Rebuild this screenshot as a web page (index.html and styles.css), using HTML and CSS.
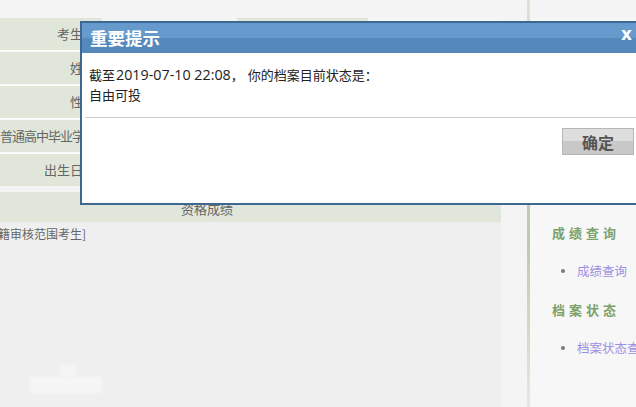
FILE: index.html
```html
<!DOCTYPE html>
<html lang="zh-CN">
<head>
<meta charset="utf-8">
<title>重要提示</title>
<link rel="stylesheet" href="styles.css">
</head>
<body>
<div class="page">
  <div class="main">
    <div class="info-table">
      <div class="row"><div class="label">考生号</div><div class="value"></div><div class="label label-2">报名号</div><div class="value"></div></div>
      <div class="row"><div class="label">姓名</div><div class="value"></div><div class="label label-2">身份证号</div><div class="value"></div></div>
      <div class="row"><div class="label">性别</div><div class="value"></div><div class="label label-2">民族</div><div class="value"></div></div>
      <div class="row"><div class="label label-long">普通高中毕业学校</div><div class="value"></div><div class="label label-2">毕业年份</div><div class="value"></div></div>
      <div class="row"><div class="label">出生日期</div><div class="value"></div><div class="label label-2">政治面貌</div><div class="value"></div></div>
    </div>
    <div class="score-row"><div class="score-cell">资格成绩</div></div>
    <div class="content">
      <p class="note">学籍审核范围考生]</p>
      <div class="blur-mark"></div>
      <div class="blur-box"></div>
    </div>
  </div>
  <div class="spacer"></div>
  <div class="rail"></div>
  <div class="sidebar">
    <h3 class="side-title">成绩查询</h3>
    <ul class="side-list"><li><a class="side-link">成绩查询</a></li></ul>
    <h3 class="side-title">档案状态</h3>
    <ul class="side-list"><li><a class="side-link">档案状态查询</a></li></ul>
  </div>
</div>

<div class="dialog">
  <div class="dialog-head">
    <span class="dialog-title">重要提示</span>
    <span class="dialog-close">x</span>
  </div>
  <div class="dialog-body">
    <p class="dialog-text">截至<span class="date">2019-07-10 22:08</span><span class="punct">，</span>你的档案目前状态是：<br>自由可投</p>
    <div class="dialog-sep"></div>
    <div class="dialog-actions"><button class="btn-ok">确定</button></div>
  </div>
</div>
</body>
</html>
```
FILE: styles.css
```css
html, body {
  margin: 0;
  padding: 0;
}
body {
  width: 636px;
  height: 407px;
  overflow: hidden;
  background: #f4f4f4;
  font-family: "Noto Sans CJK SC", "Noto Sans", sans-serif;
  text-spacing-trim: space-all;
  position: relative;
}
.page {
  display: flex;
  height: 407px;
}
.main {
  width: 501px;
  flex: none;
  display: flex;
  flex-direction: column;
  padding-top: 18px;
  box-sizing: border-box;
  background: #f4f4f4;
}
.info-table {
  display: flex;
  flex-direction: column;
  gap: 2px;
  background: #fafafa;
}
.row {
  display: flex;
  height: 32px;
}
.label {
  width: 96px;
  padding-right: 6px;
  background: #e0e7da;
  color: #666;
  font-size: 13px;
  line-height: 32px;
  text-align: right;
  white-space: nowrap;
  overflow: hidden;
}
.label-long {
  letter-spacing: -1px;
}
.value {
  width: 135px;
  background: #f3f3f3;
}
.label-2 {
  width: 125px;
}
.row .value:last-child {
  flex: 1;
  background: #f6f6f6;
}
.score-row {
  margin-top: 6px;
  height: 30px;
  background: #e0e7da;
  display: flex;
}
.score-cell {
  width: 414px;
  text-align: center;
  color: #666;
  font-size: 13px;
  line-height: 34px;
}
.content {
  flex: 1;
  background: #efefef;
  padding-top: 2px;
}
.note {
  margin: 0 0 0 -14px;
  font-size: 12px;
  line-height: 20px;
  color: #666;
}
.blur-mark {
  width: 16px;
  height: 12px;
  margin: 121px 0 0 60px;
  background: #f5f5f5;
  filter: blur(2px);
}
.blur-box {
  width: 72px;
  height: 16px;
  margin: 0 0 0 30px;
  background: #f6f6f6;
  filter: blur(2px);
}
.spacer {
  width: 26px;
  flex: none;
  background: #f4f4f4;
}
.rail {
  width: 3px;
  flex: none;
  background: linear-gradient(to bottom, #dde3d6 0%, #c3cfba 30%, #bccab2 60%, #e4e9e0 100%);
}
.sidebar {
  flex: 1;
  background: linear-gradient(to bottom, #f4f4f4 0, #f4f4f4 18px, #f7f7f7 18px);
  padding: 224px 0 0 22px;
  white-space: nowrap;
  overflow: hidden;
}
.side-title {
  margin: 0;
  font-size: 13px;
  line-height: 18px;
  font-weight: bold;
  letter-spacing: 4px;
  color: #7ba26b;
}
.side-list {
  list-style: none;
  margin: 20px 0 21px 0;
  padding: 0 0 0 25px;
}
.side-list li {
  position: relative;
  font-size: 12.5px;
  line-height: 18px;
}
.side-list li::before {
  content: "";
  position: absolute;
  left: -16px;
  top: 7px;
  width: 4px;
  height: 4px;
  border-radius: 50%;
  background: #7a7a7a;
}
.side-link {
  color: #9d90e4;
}
.dialog {
  position: absolute;
  left: 80px;
  top: 21px;
  width: 558px;
  border: 2px solid #3d6892;
  background: #fff;
}
.dialog-head {
  height: 30px;
  display: flex;
  align-items: center;
  justify-content: space-between;
  padding: 0 8px 0 8px;
  background: linear-gradient(to bottom, #6699cc 0, #6699cc 15px, #5588bb 15px, #5588bb 100%);
  color: #fff;
}
.dialog-title {
  font-size: 17.5px;
  font-weight: bold;
  line-height: 30px;
}
.dialog-close {
  font-size: 17px;
  font-weight: bold;
  line-height: 17px;
  margin-top: -8px;
  font-family: "DejaVu Sans", sans-serif;
}
.dialog-body {
  padding: 12px 0 48px 0;
}
.dialog-text {
  margin: 0 0 0 7px;
  font-family: "Noto Sans CJK SC", sans-serif;
  font-size: 13px;
  line-height: 20px;
  color: #222;
}
.date {
  margin-left: 1px;
  font-family: "Open Sans", "Noto Sans", sans-serif;
  font-size: 14.3px;
}
.punct {
  display: inline-block;
  width: 17px;
}
.dialog-sep {
  margin: 12px 0 0 3px;
  height: 1px;
  background: #cccccc;
}
.dialog-actions {
  display: flex;
  justify-content: flex-end;
  padding: 10px 6px 0 0;
}
.btn-ok {
  width: 72px;
  height: 27px;
  padding: 0;
  border: 1px solid #b6b6b6;
  background: linear-gradient(to bottom, #dedede 0, #dedede 50%, #c8c8c8 50%, #c8c8c8 100%);
  color: #555;
  font-family: "Noto Sans CJK SC", sans-serif;
  font-size: 16px;
  font-weight: bold;
}
```
